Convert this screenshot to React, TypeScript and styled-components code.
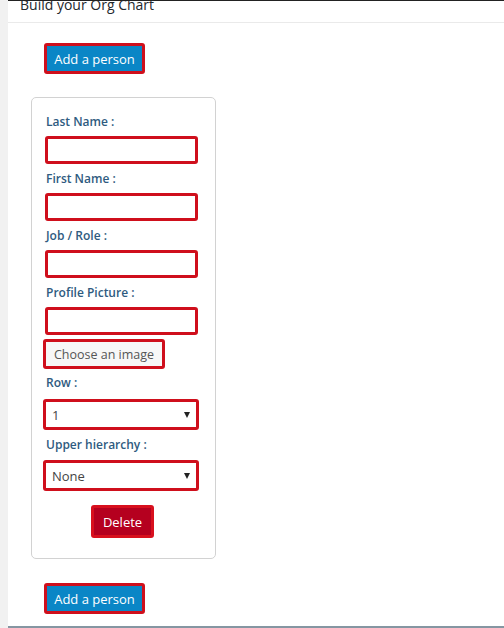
import React from "react";
import styled, { createGlobalStyle } from "styled-components";

const GlobalStyle = createGlobalStyle`
  html, body {
    margin: 0;
    padding: 0;
    background: #fff;
  }
  body {
    font-family: "Open Sans", "Liberation Sans", sans-serif;
    color: #23282d;
  }
`;

const Page = styled.div`
  display: flex;
  height: 628px;
  overflow: hidden;
`;

const Sidebar = styled.div`
  width: 8px;
  flex: none;
  background: #f1f1f1;
`;

const Main = styled.div`
  flex: 1;
  display: flex;
  flex-direction: column;
  background: #fff;
  border-top: 1px solid #222;
  border-bottom: 2px solid #8596a2;
`;

const Header = styled.div`
  height: 21px;
  flex: none;
  overflow: hidden;
  border-bottom: 1px solid #eaeaea;
  padding-left: 12px;
`;

const Title = styled.h2`
  margin: -3px 0 0;
  font-size: 14px;
  line-height: 14px;
  font-weight: 400;
  color: #23282d;
`;

const Content = styled.div`
  flex: 1;
  display: flex;
  flex-direction: column;
  align-items: flex-start;
  padding: 20px 0 0 23px;
`;

const RedFrame = `
  border: 3px solid #cf0f1c;
  border-radius: 3px;
  box-sizing: border-box;
`;

const PrimaryButton = styled.button<{ $top?: number }>`
  ${RedFrame}
  margin: ${(p) => p.$top ?? 0}px 0 0 13px;
  width: 101px;
  height: 31px;
  background: #0a86c6;
  color: #fff;
  font-family: "Open Sans", "Liberation Sans", sans-serif;
  font-size: 13px;
  padding: 0;
  cursor: pointer;
`;

const Card = styled.div`
  margin-top: 23px;
  width: 185px;
  height: 462px;
  box-sizing: border-box;
  border: 1px solid #d2d2d2;
  border-radius: 5px;
  padding: 15px 0 0 13px;
  display: flex;
  flex-direction: column;
  align-items: flex-start;
`;

const Label = styled.label<{ $top?: number; $gap?: number }>`
  display: block;
  margin-top: ${(p) => p.$top ?? 6}px;
  margin-bottom: ${(p) => p.$gap ?? 5}px;
  font-size: 12px;
  line-height: 18px;
  font-weight: 600;
  color: #2f5b80;
  padding-left: 1px;
`;

const TextInput = styled.input`
  ${RedFrame}
  width: 153px;
  height: 28px;
  margin: 0;
  background: #fff;
  outline: none;
`;

const FileButton = styled.button`
  ${RedFrame}
  margin: 4px 0 0 -2px;
  width: 122px;
  height: 30px;
  background: #f7f7f7;
  color: #555;
  font-family: "Open Sans", "Liberation Sans", sans-serif;
  font-size: 12.5px;
  padding: 0;
`;

const SelectWrap = styled.div`
  position: relative;
  margin-left: -2px;
  width: 156px;
  height: 31px;

  &::after {
    content: "";
    position: absolute;
    right: 9px;
    top: 13px;
    border-left: 3px solid transparent;
    border-right: 3px solid transparent;
    border-top: 6px solid #222;
    pointer-events: none;
  }
`;

const Select = styled.select`
  ${RedFrame}
  appearance: none;
  width: 100%;
  height: 100%;
  margin: 0;
  padding: 0 0 0 6px;
  background: #fff;
  color: #444;
  font-family: "Open Sans", "Liberation Sans", sans-serif;
  font-size: 13px;
  outline: none;
`;

const DeleteButton = styled.button`
  ${RedFrame}
  align-self: flex-start;
  margin: 14px 0 0 46px;
  width: 63px;
  height: 33px;
  background: #b5001f;
  border-color: #d8101e;
  color: #fff;
  font-family: "Open Sans", "Liberation Sans", sans-serif;
  font-size: 13px;
  padding: 0;
`;

const fields = ["Last Name :", "First Name :", "Job / Role :", "Profile Picture :"];

export default function App(): React.ReactElement {
  return (
    <>
      <GlobalStyle />
      <Page>
        <Sidebar />
        <Main>
          <Header>
            <Title>Build your Org Chart</Title>
          </Header>
          <Content>
            <PrimaryButton>Add a person</PrimaryButton>
            <Card>
              {fields.map((f, i) => (
                <React.Fragment key={f}>
                  <Label $top={i === 0 ? 0 : 6}>{f}</Label>
                  <TextInput type="text" />
                </React.Fragment>
              ))}
              <FileButton>Choose an image</FileButton>
              <Label $top={5} $gap={7}>Row :</Label>
              <SelectWrap>
                <Select defaultValue="1">
                  <option value="1">1</option>
                  <option value="2">2</option>
                </Select>
              </SelectWrap>
              <Label $top={6} $gap={6}>Upper hierarchy :</Label>
              <SelectWrap>
                <Select defaultValue="none">
                  <option value="none">None</option>
                </Select>
              </SelectWrap>
              <DeleteButton>Delete</DeleteButton>
            </Card>
            <PrimaryButton $top={24}>Add a person</PrimaryButton>
          </Content>
        </Main>
      </Page>
    </>
  );
}
